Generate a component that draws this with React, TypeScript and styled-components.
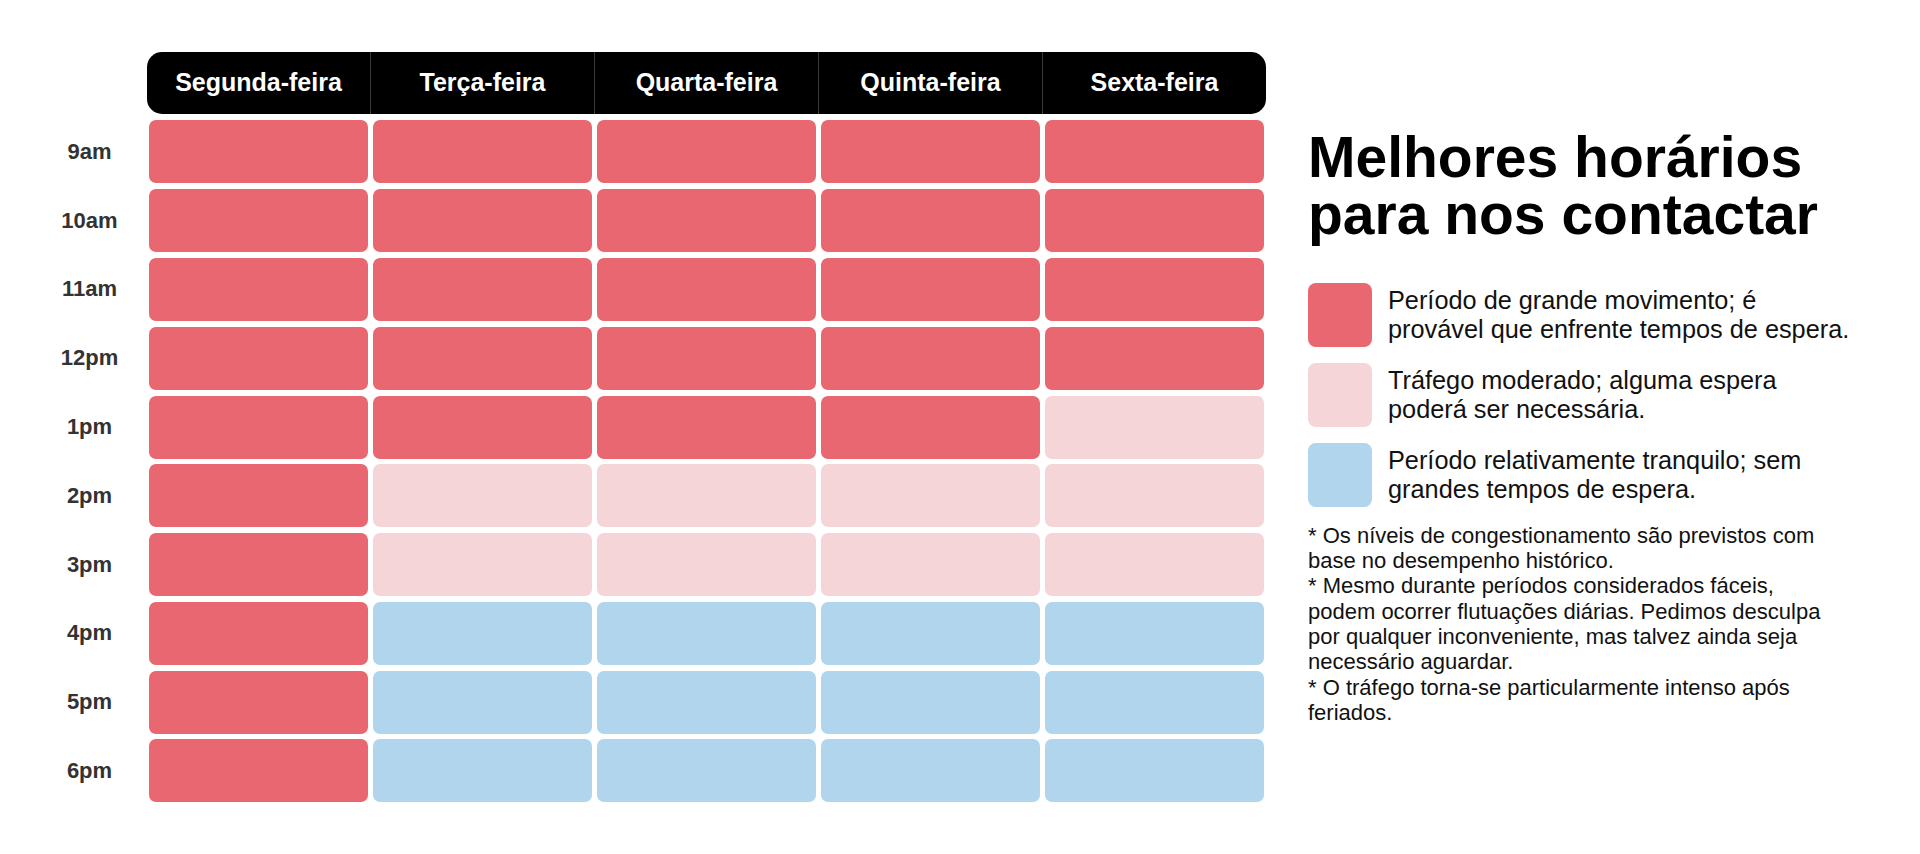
import React from "react";
import styled, { createGlobalStyle } from "styled-components";

const GlobalStyle = createGlobalStyle`
  html, body {
    margin: 0;
    padding: 0;
    background: #fff;
  }
  body {
    font-family: "Liberation Sans", Arial, sans-serif;
  }
`;

type Level = "busy" | "moderate" | "quiet";

const colors: Record<Level, string> = {
  busy: "#e96770",
  moderate: "#f5d5d8",
  quiet: "#b2d5ee",
};

const days = ["Segunda-feira", "Terça-feira", "Quarta-feira", "Quinta-feira", "Sexta-feira"];

// b = busy, m = moderate, q = quiet (Mon..Fri)
const schedule: { time: string; slots: string }[] = [
  { time: "9am", slots: "bbbbb" },
  { time: "10am", slots: "bbbbb" },
  { time: "11am", slots: "bbbbb" },
  { time: "12pm", slots: "bbbbb" },
  { time: "1pm", slots: "bbbbm" },
  { time: "2pm", slots: "bmmmm" },
  { time: "3pm", slots: "bmmmm" },
  { time: "4pm", slots: "bqqqq" },
  { time: "5pm", slots: "bqqqq" },
  { time: "6pm", slots: "bqqqq" },
];

const levelOf: Record<string, Level> = { b: "busy", m: "moderate", q: "quiet" };

const Page = styled.main`
  display: flex;
  align-items: center;
  height: 100vh;
  min-height: 854px;
  box-sizing: border-box;
  padding-left: 40px;
`;

const Schedule = styled.div`
  display: grid;
  grid-template-columns: 104px repeat(5, 219px);
  grid-template-rows: 63px;
  grid-auto-rows: 63px;
  column-gap: 5px;
  row-gap: 5.8px;
`;

const HeaderBar = styled.div`
  grid-column: 2 / span 5;
  margin: 0 -2px 0.2px;
  display: flex;
  background: #000;
  border-radius: 15px;
  overflow: hidden;
`;

const DayName = styled.div`
  flex: 1;
  display: flex;
  align-items: center;
  justify-content: center;
  color: #fff;
  font-weight: 700;
  font-size: 25px;
  & + & {
    border-left: 1px solid #3a3a3a;
  }
`;

const TimeLabel = styled.div`
  display: flex;
  align-items: center;
  justify-content: center;
  padding-right: 5px;
  color: #333;
  font-weight: 700;
  font-size: 22px;
`;

const Cell = styled.div<{ $level: Level }>`
  background: ${(p) => colors[p.$level]};
  border-radius: 7px;
`;

const Side = styled.section`
  margin-left: 44px;
  display: flex;
  flex-direction: column;
  color: #000;
`;

const Title = styled.h1`
  margin: 0 0 40px;
  font-size: 57px;
  line-height: 57px;
  font-weight: 700;
`;

const TitleLine = styled.span`
  display: block;
`;

const Legend = styled.div`
  display: flex;
  flex-direction: column;
  gap: 16px;
`;

const LegendItem = styled.div`
  display: flex;
  align-items: center;
  gap: 16px;
`;

const Swatch = styled.span<{ $level: Level }>`
  flex: none;
  width: 64px;
  height: 64px;
  border-radius: 8px;
  background: ${(p) => colors[p.$level]};
`;

const LegendText = styled.p`
  margin: 0;
  font-size: 25.3px;
  line-height: 29px;
  white-space: nowrap;
  color: #111;
`;

const Notes = styled.p`
  margin: 16px 0 0;
  font-size: 22px;
  line-height: 25.3px;
  white-space: nowrap;
  color: #111;
`;

export default function App() {
  return (
    <>
      <GlobalStyle />
      <Page>
        <Schedule>
          <span />
          <HeaderBar>
            {days.map((d) => (
              <DayName key={d}>{d}</DayName>
            ))}
          </HeaderBar>
          {schedule.map((row) => (
            <React.Fragment key={row.time}>
              <TimeLabel>{row.time}</TimeLabel>
              {row.slots.split("").map((s, i) => (
                <Cell key={i} $level={levelOf[s]} />
              ))}
            </React.Fragment>
          ))}
        </Schedule>

        <Side>
          <Title>
            <TitleLine>Melhores horários</TitleLine>
            <TitleLine>para nos contactar</TitleLine>
          </Title>
          <Legend>
            <LegendItem>
              <Swatch $level="busy" />
              <LegendText>
                Período de grande movimento; é
                <br />
                provável que enfrente tempos de espera.
              </LegendText>
            </LegendItem>
            <LegendItem>
              <Swatch $level="moderate" />
              <LegendText>
                Tráfego moderado; alguma espera
                <br />
                poderá ser necessária.
              </LegendText>
            </LegendItem>
            <LegendItem>
              <Swatch $level="quiet" />
              <LegendText>
                Período relativamente tranquilo; sem
                <br />
                grandes tempos de espera.
              </LegendText>
            </LegendItem>
          </Legend>
          <Notes>
            * Os níveis de congestionamento são previstos com
            <br />
            base no desempenho histórico.
            <br />
            * Mesmo durante períodos considerados fáceis,
            <br />
            podem ocorrer flutuações diárias. Pedimos desculpa
            <br />
            por qualquer inconveniente, mas talvez ainda seja
            <br />
            necessário aguardar.
            <br />
            * O tráfego torna-se particularmente intenso após
            <br />
            feriados.
          </Notes>
        </Side>
      </Page>
    </>
  );
}
